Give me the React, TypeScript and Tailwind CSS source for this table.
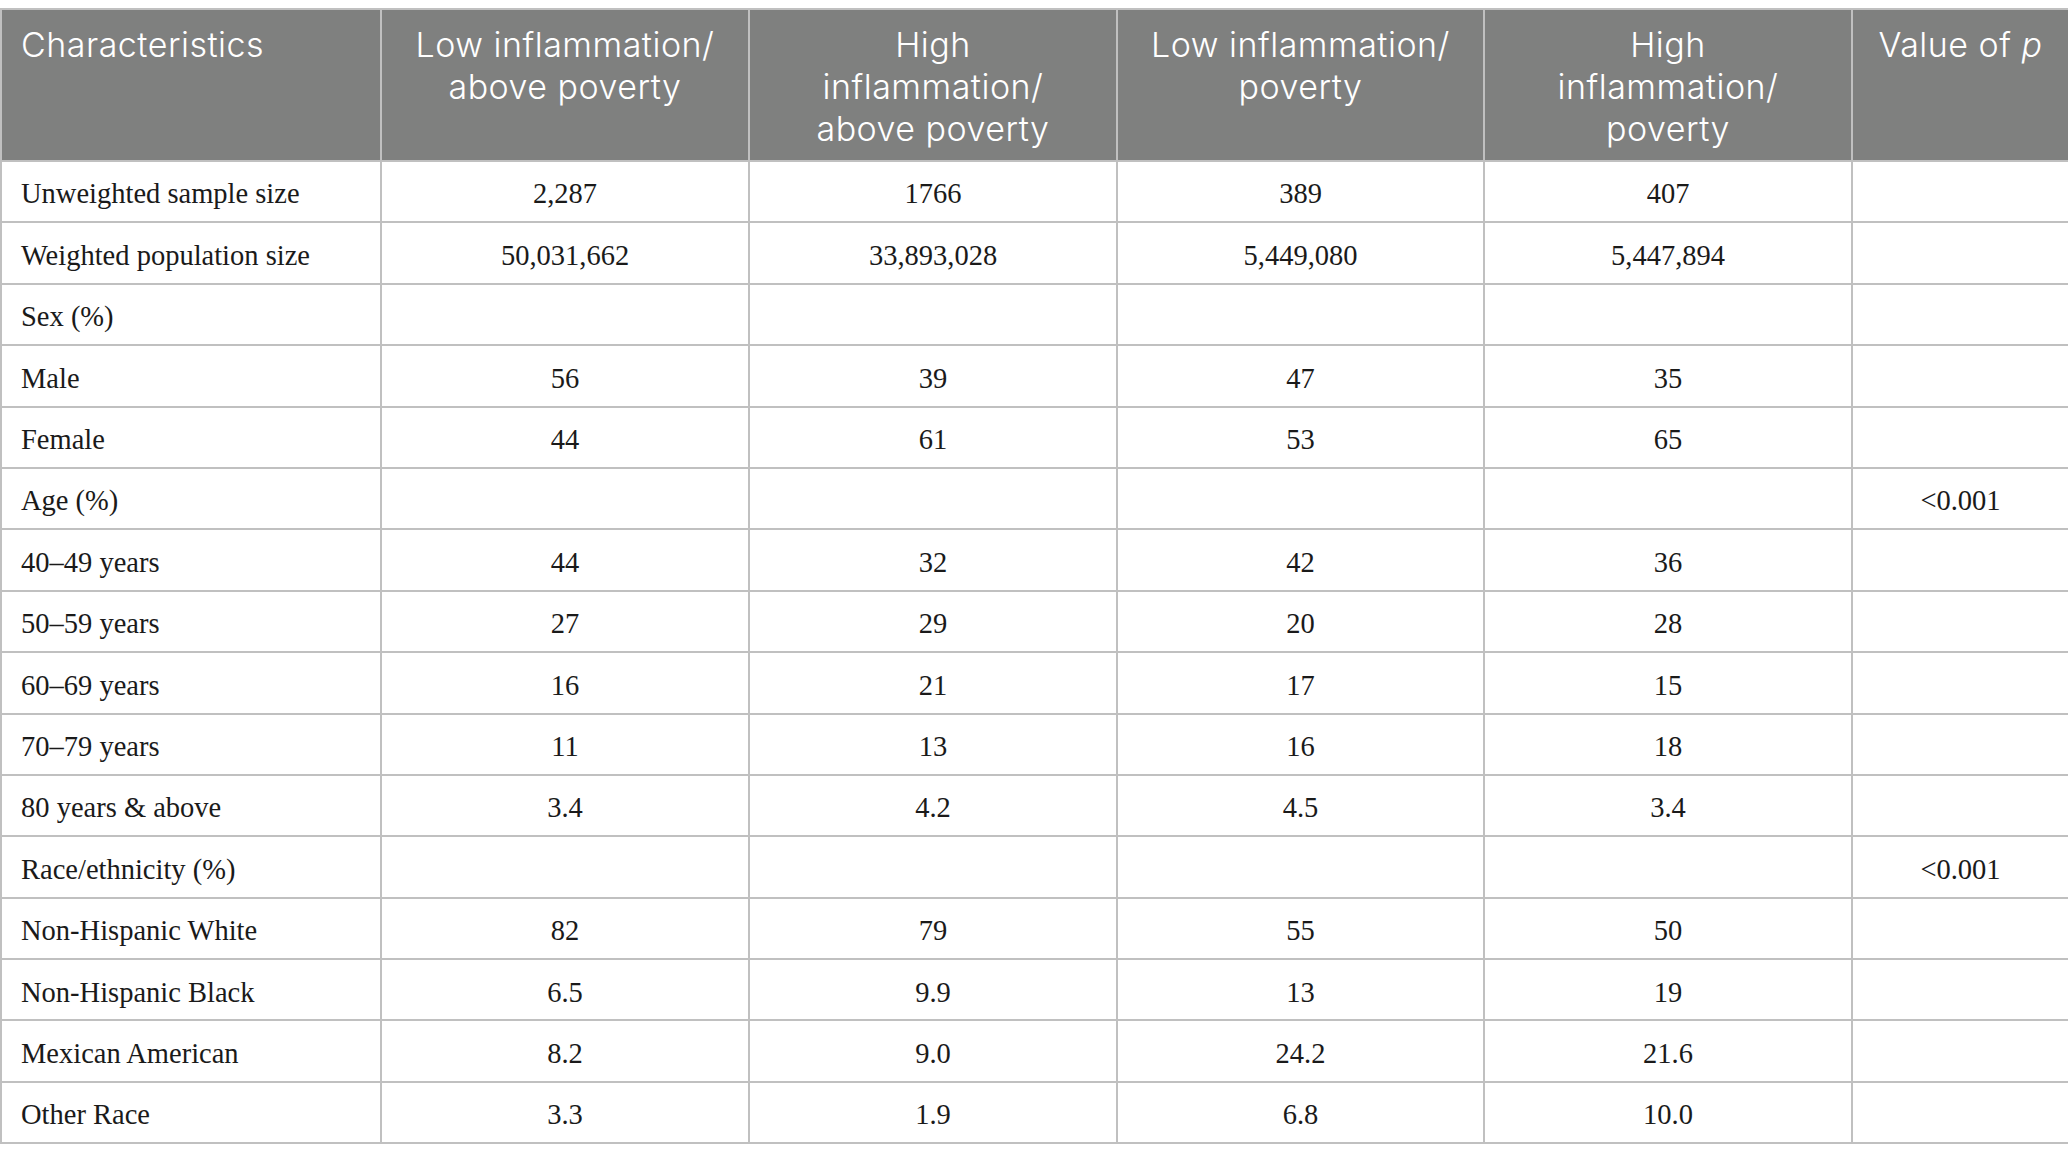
import React from 'react'

const HEADERS: React.ReactNode[] = [
  'Characteristics',
  <>Low inflammation/<br />above poverty</>,
  <>High<br />inflammation/<br />above poverty</>,
  <>Low inflammation/<br />poverty</>,
  <>High<br />inflammation/<br />poverty</>,
  <>Value of <i>p</i></>,
]

const ROWS: string[][] = [
  ['Unweighted sample size', '2,287', '1766', '389', '407', ''],
  ['Weighted population size', '50,031,662', '33,893,028', '5,449,080', '5,447,894', ''],
  ['Sex (%)', '', '', '', '', ''],
  ['Male', '56', '39', '47', '35', ''],
  ['Female', '44', '61', '53', '65', ''],
  ['Age (%)', '', '', '', '', '<0.001'],
  ['40–49 years', '44', '32', '42', '36', ''],
  ['50–59 years', '27', '29', '20', '28', ''],
  ['60–69 years', '16', '21', '17', '15', ''],
  ['70–79 years', '11', '13', '16', '18', ''],
  ['80 years & above', '3.4', '4.2', '4.5', '3.4', ''],
  ['Race/ethnicity (%)', '', '', '', '', '<0.001'],
  ['Non-Hispanic White', '82', '79', '55', '50', ''],
  ['Non-Hispanic Black', '6.5', '9.9', '13', '19', ''],
  ['Mexican American', '8.2', '9.0', '24.2', '21.6', ''],
  ['Other Race', '3.3', '1.9', '6.8', '10.0', ''],
]

const WIDTHS = ['w-[380px]', 'w-[368px]', 'w-[368px]', 'w-[367px]', 'w-[368px]', 'w-[217px]']

export default function App() {
  return (
    <div className="w-[2068px] h-[1161px] bg-white pt-[8px]">
      <table className="table-fixed border-collapse w-[2068px]">
        <colgroup>
          {WIDTHS.map((w, i) => (
            <col key={i} className={w} />
          ))}
        </colgroup>
        <thead>
          <tr className="h-[152px]">
            {HEADERS.map((h, i) => (
              <th
                key={i}
                className={
                  'border-2 border-[#c0c0c0] bg-[#7f807f] text-white font-light align-top pt-[14px] text-[34px] leading-[42px] tracking-[0.5px] font-["Inter",sans-serif] ' +
                  (i === 0 ? 'text-left pl-[19px]' : 'text-center')
                }
              >
                {h}
              </th>
            ))}
          </tr>
        </thead>
        <tbody>
          {ROWS.map((row, r) => (
            <tr key={r} className="h-[61.4px]">
              {row.map((cell, c) => (
                <td
                  key={c}
                  className={
                    'border-2 border-[#c0c0c0] text-[#1a1a1a] text-[28.5px] leading-none align-middle pt-[6px] font-["Liberation_Serif",serif] ' +
                    (c === 0 ? 'text-left pl-[19px]' : 'text-center')
                  }
                >
                  {cell}
                </td>
              ))}
            </tr>
          ))}
        </tbody>
      </table>
    </div>
  )
}
